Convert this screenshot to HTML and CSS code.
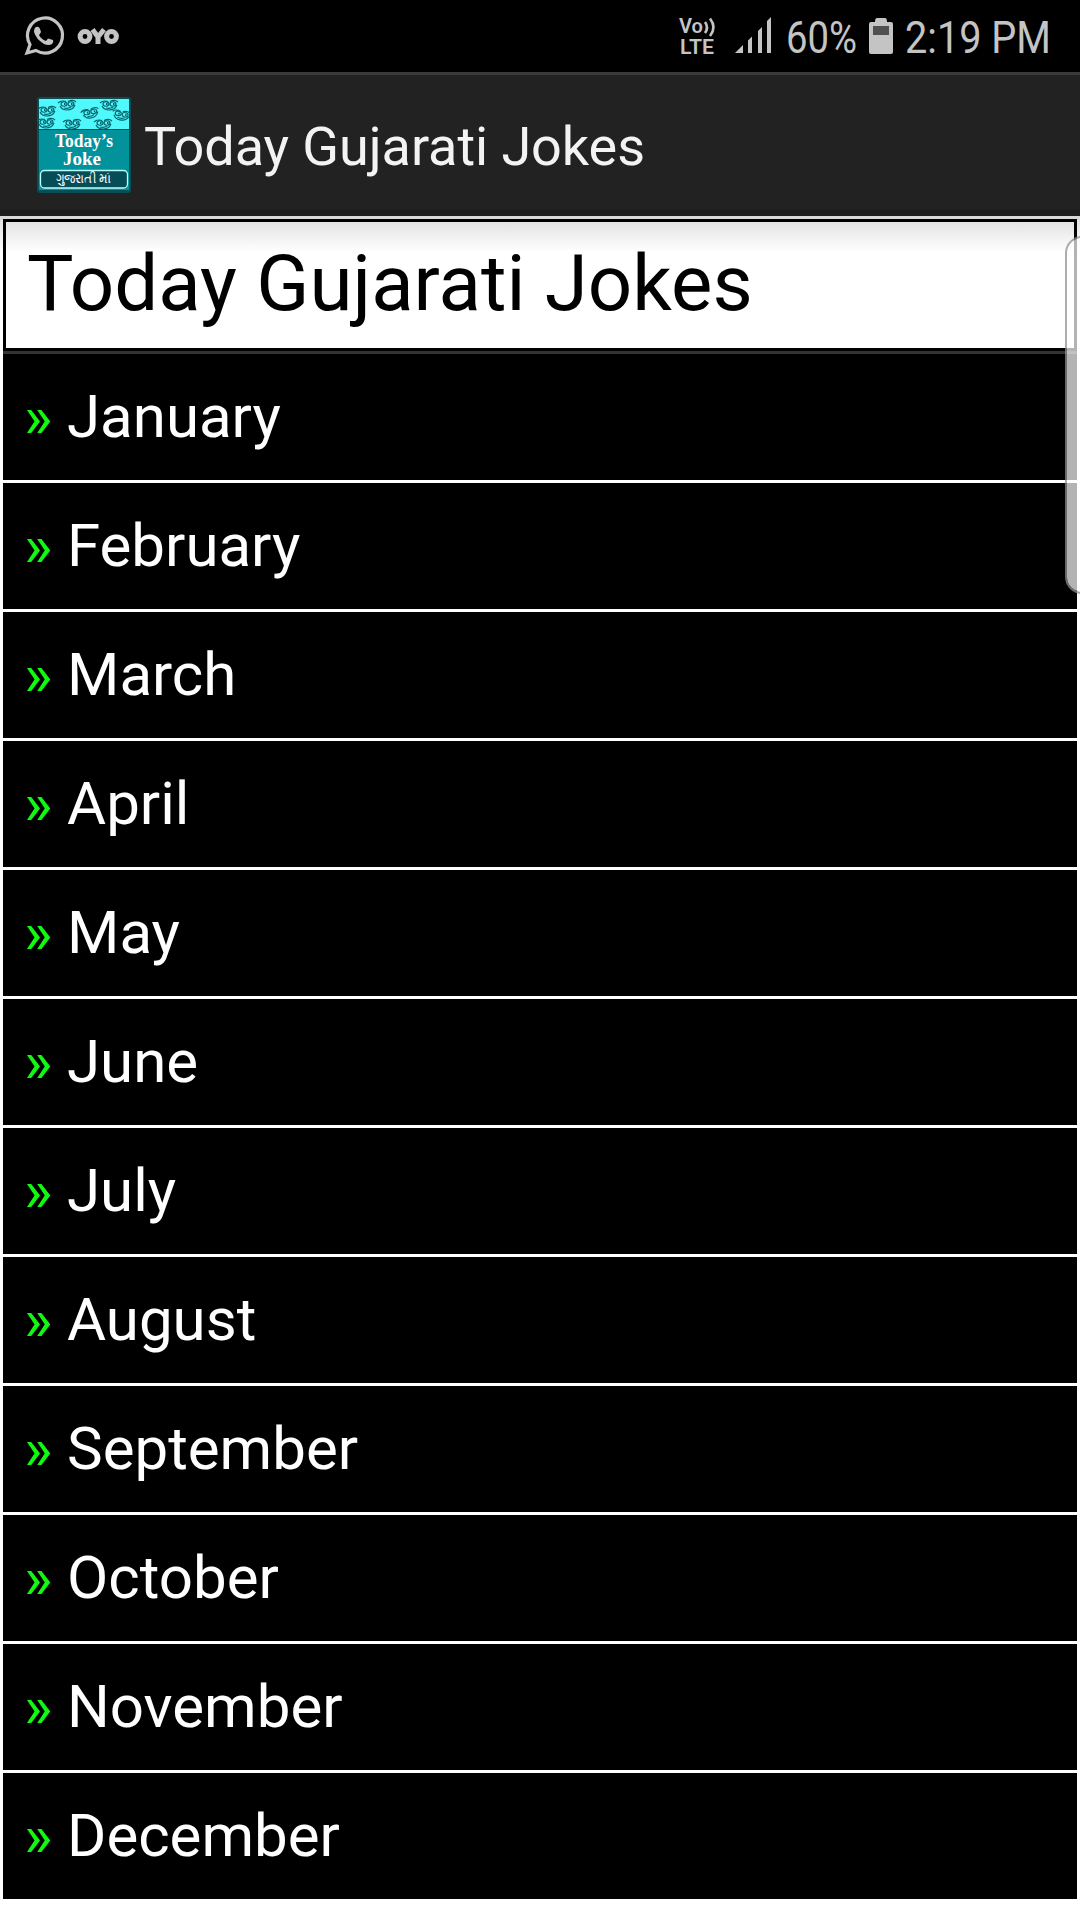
FILE: index.html
```html
<!DOCTYPE html>
<html lang="en">
<head>
<meta charset="utf-8">
<title>Today Gujarati Jokes</title>
<link rel="stylesheet" href="styles.css">
</head>
<body>
<header class="status">
  <svg class="notifications" width="130" height="72" viewBox="0 0 130 72">
    <path d="M27 53 L30 44.5 A17.5 17.5 0 1 1 36 50.5 Z" fill="none" stroke="#c4c4c4" stroke-width="3.2"/>
    <path d="M36 27 Q39 26 40 29 L41 32 Q40 34 39 35 Q41 39 46 41 L48 38.5 L53 40 Q54 42 52 44 Q49 46 44 44 Q36 39 34 32 Q34 28 36 27Z" fill="#c4c4c4"/>
    <g fill="none" stroke="#c4c4c4" stroke-width="5"><circle cx="85" cy="36.5" r="4.9"/><circle cx="111.5" cy="36.5" r="4.9"/><path d="M92.5 29.5 L98 37 L104 29.5 M98 36 V44"/></g>
  </svg>
  <svg class="indicators" width="420" height="72" viewBox="660 0 420 72" fill="#c4c4c4">
    <g class="network"><text x="679" y="33" font-size="20" textLength="24" lengthAdjust="spacingAndGlyphs">Vo</text>
    <text x="680" y="53.500" font-size="21" textLength="34" lengthAdjust="spacingAndGlyphs">LTE</text></g>
    <path d="M705 22 Q709 27.5 705 33 M710 18.5 Q717 27.5 710 36" fill="none" stroke="#c4c4c4" stroke-width="2.6"/>
    <path d="M735 53 L743 45 V53Z M748 53 V40.5 L752 36.5 V53Z M758 53 V31 L762 27 V53Z M767 53 V21 L771 17 V53Z"/>
    <text x="786" y="53" font-size="45" textLength="71" lengthAdjust="spacingAndGlyphs">60%</text>
    <path d="M877 18 H885 Q887 18 887 22 H891 Q893 22 893 24 V52 Q893 54 891 54 H871 Q869 54 869 52 V24 Q869 22 871 22 H875 Q875 18 877 18Z"/>
    <path d="M873 26 H889 V35 H873Z" fill="#505050"/>
    <text x="905" y="53" font-size="45" textLength="146" lengthAdjust="spacingAndGlyphs">2:19 PM</text>
  </svg>
</header>
<div class="appbar">
  <svg class="logo" width="96" height="98" viewBox="0 0 96 98">
    <defs>
      <g id="face" fill="none" stroke="#08606a" stroke-width="1.1">
        <path d="M-7 1 Q-5 5 0 5 Q6 5 8 0"/>
        <ellipse cx="-3" cy="-1" rx="3" ry="2.2"/><ellipse cx="4" cy="-1" rx="3" ry="2.2"/>
        <path d="M-9 -2 Q-6 -5 -1 -3.500 M1 -3.500 Q6 -6 9 -3 M-3 3 Q1 4 4 2"/>
        <path d="M-3 -1h1.500 M4 -1h1.500" stroke-width="1.800"/>
      </g>
    </defs>
    <rect x="1" y="1" width="94" height="96" rx="3" fill="#054f55"/>
    <rect x="3" y="3" width="90" height="30" fill="#4ff8fa"/>
    <rect x="3" y="34" width="90" height="60" fill="#02929c"/>
    <use href="#face" x="11" y="15"/><use href="#face" x="31" y="9"/>
    <use href="#face" transform="translate(54 17) rotate(-10)"/><use href="#face" x="73" y="9"/>
    <use href="#face" transform="translate(85 19) rotate(12)"/><use href="#face" x="10" y="27"/>
    <use href="#face" x="36" y="28"/><use href="#face" x="67" y="28"/>
    <g class="logo-title">
      <text x="48" y="51" textLength="58" lengthAdjust="spacingAndGlyphs">Today’s</text>
      <text x="46" y="68.500" textLength="38" lengthAdjust="spacingAndGlyphs">Joke</text>
    </g>
    <rect x="4.5" y="74.5" width="87" height="17.500" rx="4" fill="#064d57" stroke="#bff" stroke-width="1.3"/>
    <text class="logo-tag" x="47" y="87" textLength="55" lengthAdjust="spacingAndGlyphs">ગુજરાતી માં</text>
  </svg>
  <span class="appbar-title">Today Gujarati Jokes</span>
</div>
<main class="content">
  <h1 class="heading">Today Gujarati Jokes</h1>
  <ul class="months">
    <li><span class="mark">»</span> January</li>
    <li><span class="mark">»</span> February</li>
    <li><span class="mark">»</span> March</li>
    <li><span class="mark">»</span> April</li>
    <li><span class="mark">»</span> May</li>
    <li><span class="mark">»</span> June</li>
    <li><span class="mark">»</span> July</li>
    <li><span class="mark">»</span> August</li>
    <li><span class="mark">»</span> September</li>
    <li><span class="mark">»</span> October</li>
    <li><span class="mark">»</span> November</li>
    <li><span class="mark">»</span> December</li>
  </ul>
  <div class="scroll-thumb"></div>
</main>
</body>
</html>
```
FILE: styles.css
```css
* { box-sizing: border-box; }
body {
  margin: 0;
  width: 1080px;
  height: 1920px;
  overflow: hidden;
  background: #fff;
  font-family: Roboto, "Liberation Sans", sans-serif;
}
svg { display: block; flex: none; }
.status {
  display: flex;
  justify-content: space-between;
  height: 72px;
  background: #000;
}
.network { font-weight: 600; }
.appbar {
  display: flex;
  align-items: flex-start;
  height: 144px;
  padding: 21px 0 0 36px;
  gap: 12px;
  border-top: 3px solid #3a3a3a;
  background: linear-gradient(#222 0 134px, #1c1c1c 135px);
}
.logo-title {
  font: 700 18px "Liberation Serif", serif;
  text-anchor: middle;
  fill: #fff;
}
.logo-tag { font-size: 13px; text-anchor: middle; fill: #fff; }
.appbar-title {
  padding-top: 19px;
  font-size: 54px;
  line-height: 64px;
  letter-spacing: -.07px;
  color: #f3f3f3;
}
.content {
  position: relative;
  height: 1704px;
  padding: 3px 3px 0;
  background: linear-gradient(#d6d6d6 0 3px, #e2e2e2 5px, #fff 36px);
}
.heading {
  margin: 0;
  height: 132px;
  padding-left: 21px;
  border: 3px solid #000;
  font-size: 78px;
  font-weight: 400;
  line-height: 123px;
  color: #000;
}
.months {
  margin: 0;
  padding: 0;
  list-style: none;
}
.months li {
  height: 129px;
  padding-left: 21px;
  border-top: 3px solid #fff;
  background: #000;
  color: #fff;
  font-size: 60px;
  line-height: 126px;
}
.months li:first-child { border-top-color: #333; }
.mark { color: #10fa10; }
.scroll-thumb {
  position: absolute;
  top: 20px;
  left: 1065px;
  width: 36px;
  height: 358px;
  border: 2px solid rgba(145, 145, 145, .74);
  border-radius: 17px;
  background: rgba(255, 255, 255, .7);
  background-clip: padding-box;
}
```
